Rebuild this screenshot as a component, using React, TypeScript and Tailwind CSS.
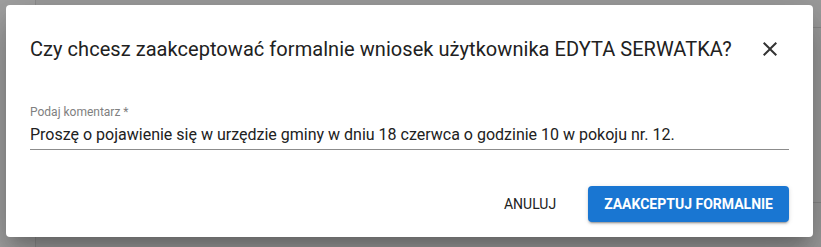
import React from 'react';

const CloseIcon = () => (
  <svg viewBox="0 0 24 24" className="w-6 h-6 fill-[#333333]">
    <path d="M19 6.41 17.59 5 12 10.59 6.41 5 5 6.41 10.59 12 5 17.59 6.41 19 12 13.41 17.59 19 19 17.59 13.41 12z" />
  </svg>
);

export default function App() {
  return (
    <div className="relative w-[821px] h-[247px] overflow-hidden font-['Roboto',sans-serif]">
      {/* Underlying page behind the backdrop */}
      <div className="flex h-full">
        <div className="w-[36px] h-full bg-[#a2a2a2] border-r border-[#8f8f8f]" />
        <div className="flex-1 h-full bg-[#9d9d9d] flex flex-col">
          <div className="h-[28px] border-b border-[#8a8a8a]" />
          <div className="h-[175px] border-b border-[#8a8a8a]" />
        </div>
      </div>

      {/* Dialog */}
      <div className="absolute left-[6px] top-[5px] w-[807px] h-[232px] bg-white rounded-[4px] shadow-[0_11px_15px_-7px_rgba(0,0,0,0.2),0_24px_38px_3px_rgba(0,0,0,0.14),0_9px_46px_8px_rgba(0,0,0,0.12)] px-6 pt-[28px] flex flex-col">
        <div className="flex items-center justify-between h-[32px]">
          <h2 className="text-[20px] leading-[32px] font-normal text-[#212121] tracking-[0.05px]">
            Czy chcesz zaakceptować formalnie wniosek użytkownika EDYTA SERWATKA?
          </h2>
          <button className="w-10 h-10 -mr-[1px] flex items-center justify-center">
            <CloseIcon />
          </button>
        </div>

        <div className="mt-[39px]">
          <label className="block text-[12px] leading-[16px] text-[#808080]">Podaj komentarz *</label>
          <div className="mt-[3px] pb-[2px] border-b border-[#8c8c8c]">
            <div className="text-[16px] leading-[24px] text-[#212121]">
              Proszę o pojawienie się w urzędzie gminy w dniu 18 czerwca o godzinie 10 w pokoju nr. 12.
            </div>
          </div>
        </div>

        <div className="mt-[36px] flex items-center justify-end gap-[24px]">
          <button className="h-9 px-2 text-[14px] font-normal text-[#212121] uppercase">
            Anuluj
          </button>
          <button className="h-9 px-4 rounded-[4px] bg-[#1976d2] text-white text-[14px] font-bold uppercase shadow-[0_3px_1px_-2px_rgba(0,0,0,0.2),0_2px_2px_0_rgba(0,0,0,0.14),0_1px_5px_0_rgba(0,0,0,0.12)]">
            Zaakceptuj formalnie
          </button>
        </div>
      </div>
    </div>
  );
}
